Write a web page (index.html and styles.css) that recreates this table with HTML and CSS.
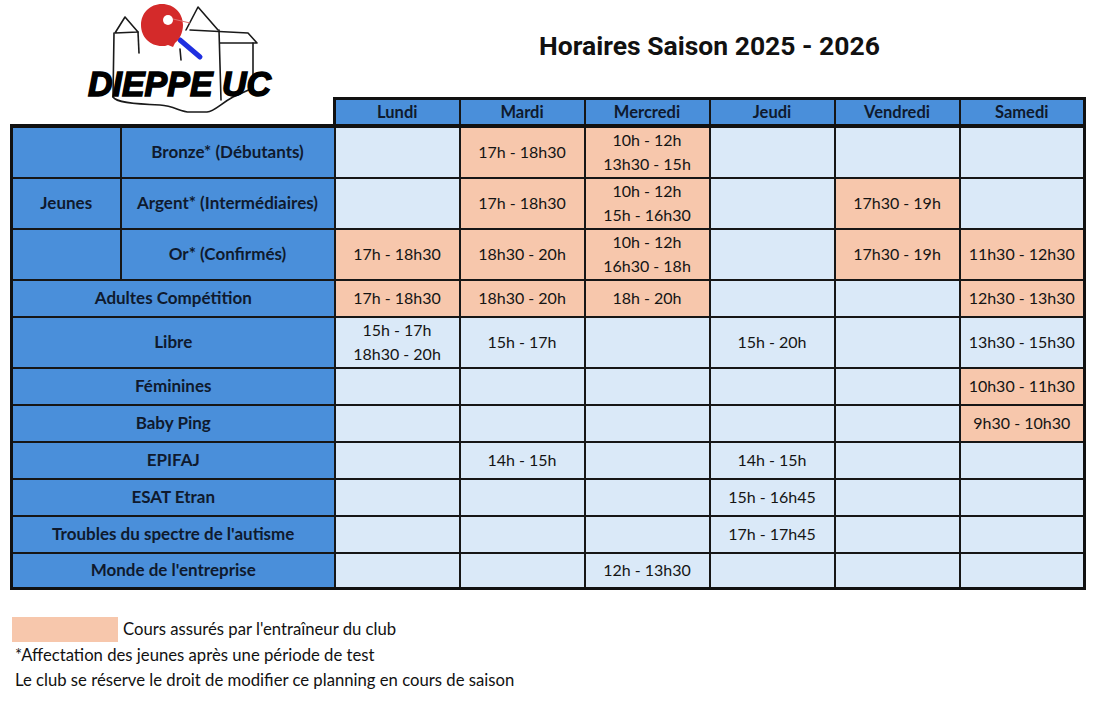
FILE: index.html
```html
<!DOCTYPE html>
<html lang="fr">
<head>
<meta charset="utf-8">
<title>Horaires Saison 2025 - 2026</title>
<link rel="stylesheet" href="styles.css">
</head>
<body>
<header class="top">
  <div class="logo">
    <svg class="logo-svg" width="200" height="115" viewBox="0 0 200 115" xmlns="http://www.w3.org/2000/svg">
      <g fill="none" stroke="#1a1a1a" stroke-width="1.6" stroke-linecap="round" stroke-linejoin="round">
        <path d="M35,33 L45,17 L58,32 Z"/>
        <path d="M34,33 L33,97"/>
        <path d="M58,32 L59,53"/>
        <path d="M106,30 L118,7 L138,30"/>
        <path d="M110,30 L168,33 L177,43 L140,43"/>
        <path d="M139,30 L141,100"/>
        <path d="M173,43 L173,88"/>
        <path d="M100,49 L101,60"/>
        <path d="M33,97 C36,102 50,104 80,105 C95,106 100,112 110,112 L127,112 C135,111 140,104 153,97 L173,88"/>
      </g>
      <path d="M100,40 L120,57" stroke="#1f2fe0" stroke-width="5" stroke-linecap="round"/>
      <path d="M82,4 C94,4 103,13 103,25 C103,33 99,40 95,43 L93,47 L88,45 C86,46 84,46 82,46 C70,46 61,37 61,25 C61,13 70,4 82,4 Z" fill="#d42a2a"/>
      <path d="M93,19 L110,23" stroke="#e07070" stroke-width="1"/>
      <circle cx="88" cy="20" r="5" fill="#fff"/>
      <text class="logo-text" x="8" y="96" textLength="183" lengthAdjust="spacingAndGlyphs">DIEPPE UC</text>
    </svg>
  </div>
  <h1 class="title">Horaires Saison 2025 - 2026</h1>
</header>

<table class="sched">
  <colgroup>
    <col class="c-group">
    <col class="c-label">
    <col><col><col><col><col><col>
  </colgroup>
  <thead>
    <tr>
      <th class="blank" colspan="2"></th>
      <th>Lundi</th>
      <th>Mardi</th>
      <th>Mercredi</th>
      <th>Jeudi</th>
      <th>Vendredi</th>
      <th>Samedi</th>
    </tr>
  </thead>
  <tbody>
    <tr class="tall first">
      <td class="lab grp split"></td>
      <td class="lab">Bronze* (Débutants)</td>
      <td class="e"></td>
      <td class="p">17h - 18h30</td>
      <td class="p">10h - 12h<br>13h30 - 15h</td>
      <td class="e"></td>
      <td class="e"></td>
      <td class="e"></td>
    </tr>
    <tr class="tall">
      <td class="lab grp split">Jeunes</td>
      <td class="lab">Argent* (Intermédiaires)</td>
      <td class="e"></td>
      <td class="p">17h - 18h30</td>
      <td class="p">10h - 12h<br>15h - 16h30</td>
      <td class="e"></td>
      <td class="p">17h30 - 19h</td>
      <td class="e"></td>
    </tr>
    <tr class="tall">
      <td class="lab grp"></td>
      <td class="lab">Or* (Confirmés)</td>
      <td class="p">17h - 18h30</td>
      <td class="p">18h30 - 20h</td>
      <td class="p">10h - 12h<br>16h30 - 18h</td>
      <td class="e"></td>
      <td class="p">17h30 - 19h</td>
      <td class="p">11h30 - 12h30</td>
    </tr>
    <tr class="short">
      <td class="lab" colspan="2">Adultes Compétition</td>
      <td class="p">17h - 18h30</td>
      <td class="p">18h30 - 20h</td>
      <td class="p">18h - 20h</td>
      <td class="e"></td>
      <td class="e"></td>
      <td class="p">12h30 - 13h30</td>
    </tr>
    <tr class="tall">
      <td class="lab" colspan="2">Libre</td>
      <td class="e">15h - 17h<br>18h30 - 20h</td>
      <td class="e">15h - 17h</td>
      <td class="e"></td>
      <td class="e">15h - 20h</td>
      <td class="e"></td>
      <td class="e">13h30 - 15h30</td>
    </tr>
    <tr class="short">
      <td class="lab" colspan="2">Féminines</td>
      <td class="e"></td>
      <td class="e"></td>
      <td class="e"></td>
      <td class="e"></td>
      <td class="e"></td>
      <td class="p">10h30 - 11h30</td>
    </tr>
    <tr class="short">
      <td class="lab" colspan="2">Baby Ping</td>
      <td class="e"></td>
      <td class="e"></td>
      <td class="e"></td>
      <td class="e"></td>
      <td class="e"></td>
      <td class="p">9h30 - 10h30</td>
    </tr>
    <tr class="short">
      <td class="lab" colspan="2">EPIFAJ</td>
      <td class="e"></td>
      <td class="e">14h - 15h</td>
      <td class="e"></td>
      <td class="e">14h - 15h</td>
      <td class="e"></td>
      <td class="e"></td>
    </tr>
    <tr class="short">
      <td class="lab" colspan="2">ESAT Etran</td>
      <td class="e"></td>
      <td class="e"></td>
      <td class="e"></td>
      <td class="e">15h - 16h45</td>
      <td class="e"></td>
      <td class="e"></td>
    </tr>
    <tr class="short">
      <td class="lab" colspan="2">Troubles du spectre de l'autisme</td>
      <td class="e"></td>
      <td class="e"></td>
      <td class="e"></td>
      <td class="e">17h - 17h45</td>
      <td class="e"></td>
      <td class="e"></td>
    </tr>
    <tr class="short last">
      <td class="lab" colspan="2">Monde de l'entreprise</td>
      <td class="e"></td>
      <td class="e"></td>
      <td class="e">12h - 13h30</td>
      <td class="e"></td>
      <td class="e"></td>
      <td class="e"></td>
    </tr>
  </tbody>
</table>

<footer class="notes">
  <div class="legend">
    <span class="swatch"></span>
    <span class="legend-text">Cours assurés par l'entraîneur du club</span>
  </div>
  <p class="note">*Affectation des jeunes après une période de test</p>
  <p class="note">Le club se réserve le droit de modifier ce planning en cours de saison</p>
</footer>
</body>
</html>
```

FILE: styles.css
```css
html, body {
  margin: 0;
  padding: 0;
  background: #ffffff;
}

body {
  font-family: Lato, "Liberation Sans", sans-serif;
  color: #111111;
  width: 1097px;
  height: 702px;
  overflow: hidden;
}

.top {
  display: flex;
  height: 97px;
}

.logo {
  width: 333px;
  padding-left: 80px;
  box-sizing: border-box;
  height: 97px;
  position: relative;
  z-index: 0;
}

.logo-svg {
  display: block;
}

.logo-text {
  font-family: "Liberation Sans", Arial, sans-serif;
  font-weight: 700;
  font-style: italic;
  font-size: 35px;
  fill: #000000;
  stroke: #000000;
  stroke-width: 1.5px;
}

.title {
  flex: 1;
  margin: 0;
  padding: 29px 11px 0 0;
  text-align: center;
  font-family: Roboto, "Liberation Sans", sans-serif;
  font-weight: 700;
  font-size: 26.5px;
  line-height: 34px;
  color: #111111;
}

.sched {
  border-collapse: collapse;
  table-layout: fixed;
  width: 1076px;
  margin-left: 10px;
  position: relative;
  z-index: 1;
}

.c-group { width: 109px; }
.c-label { width: 214px; }

.sched th,
.sched td {
  border: 2px solid #161616;
  padding: 0;
  text-align: center;
  vertical-align: middle;
  font-size: 16px;
  line-height: 24.5px;
  color: #141414;
}

.sched thead tr {
  height: 27px;
}

.sched thead th {
  background: #4a8fda;
  font-weight: 700;
  font-size: 16.5px;
  color: #0f1a2e;
  border-top: 3px solid #111111;
  line-height: 20px;
}

.sched thead th.blank {
  background: transparent;
  border: none;
}

.sched thead th:nth-child(2) { border-left: 3px solid #111111; }
.sched thead th:last-child { border-right: 3px solid #111111; }

.sched tbody tr:first-child td { border-top: 4px solid #111111; }
.sched tbody tr.last td { border-bottom: 3px solid #111111; }
.sched tbody td:first-child { border-left: 3px solid #111111; }
.sched tbody td:last-child { border-right: 3px solid #111111; }

.sched tr.tall { height: 51px; }
.sched tr.tall.first { height: 49px; }
.sched tr.short { height: 37px; }
.sched tr.short.last { height: 36px; }

.sched td.lab {
  background: #4a8fda;
  font-weight: 700;
  font-size: 17px;
  color: #0f1a2e;
}

.sched td.grp.split {
  border-bottom: 1px solid #7fb2ea;
}

.e { background: #dae9f8; }
.p { background: #f7c7ac; }

.notes {
  margin: 27px 0 0 12px;
  font-size: 16.7px;
  line-height: 25.5px;
  color: #111111;
}

.legend {
  display: flex;
  align-items: center;
  gap: 5px;
}

.swatch {
  display: block;
  width: 106px;
  height: 25px;
  background: #f7c7ac;
}

.note {
  margin: 0;
  padding-left: 3px;
}
```
